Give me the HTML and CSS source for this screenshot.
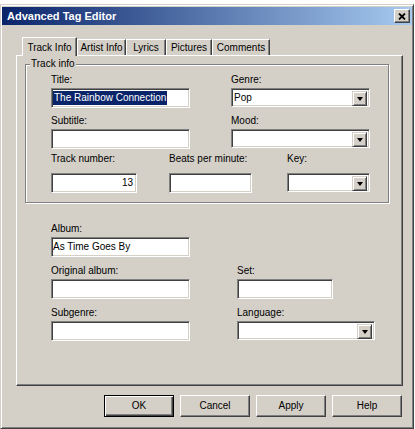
FILE: index.html
```html
<!DOCTYPE html>
<html>
<head>
<meta charset="utf-8">
<title>Advanced Tag Editor</title>
<link rel="stylesheet" href="styles.css">
</head>
<body>
<div class="window">
  <div class="titlebar">
    <span class="title">Advanced Tag Editor</span>
    <div class="close-btn"><svg width="8" height="7" viewBox="0 0 8 7"><path d="M1 0.5L7 6.5M7 0.5L1 6.5" stroke="#000" stroke-width="1.8" fill="none"/></svg></div>
  </div>
  <div class="tabs">
    <div class="tab tab-active w-track">Track Info</div>
    <div class="tab w-artist">Artist Info</div>
    <div class="tab w-lyrics">Lyrics</div>
    <div class="tab w-pictures">Pictures</div>
    <div class="tab w-comments">Comments</div>
  </div>
  <div class="panel">
    <div class="group">
      <span class="group-title">Track info</span>
      <div class="row">
        <div class="field w139"><span class="label">Title:</span><div class="edit"><span class="sel">The Rainbow Connection</span></div></div>
        <div class="field w139"><span class="label">Genre:</span><div class="combo"><span class="value">Pop</span><span class="drop"><span class="arrow"></span></span></div></div>
      </div>
      <div class="row row-2">
        <div class="field w139"><span class="label">Subtitle:</span><div class="edit"></div></div>
        <div class="field w139"><span class="label">Mood:</span><div class="combo"><span class="value"></span><span class="drop"><span class="arrow"></span></span></div></div>
      </div>
      <div class="row row-3">
        <div class="field w86"><span class="label label-tall">Track number:</span><div class="edit edit-right">13</div></div>
        <div class="field w83 gap-beats"><span class="label label-tall">Beats per minute:</span><div class="edit"></div></div>
        <div class="field w83 gap-key"><span class="label label-tall">Key:</span><div class="combo"><span class="value"></span><span class="drop"><span class="arrow"></span></span></div></div>
      </div>
    </div>
    <div class="lower">
      <div class="field"><span class="label">Album:</span><div class="edit">As Time Goes By</div></div>
      <div></div>
      <div class="field"><span class="label">Original album:</span><div class="edit"></div></div>
      <div class="field w96"><span class="label">Set:</span><div class="edit"></div></div>
      <div class="field"><span class="label">Subgenre:</span><div class="edit"></div></div>
      <div class="field"><span class="label">Language:</span><div class="combo"><span class="value"></span><span class="drop"><span class="arrow"></span></span></div></div>
    </div>
  </div>
  <div class="buttons">
    <div class="btn btn-default">OK</div>
    <div class="btn">Cancel</div>
    <div class="btn">Apply</div>
    <div class="btn">Help</div>
  </div>
</div>
</body>
</html>
```
FILE: styles.css
```css
* { box-sizing: border-box; }
html, body { margin: 0; padding: 0; }
body {
  background: #fff;
  width: 415px;
  height: 429px;
  overflow: hidden;
  font-family: "Liberation Sans", Arial, sans-serif;
  font-size: 10px;
  color: #000;
}
.window {
  margin-top: 4px;
  width: 414px;
  height: 425px;
  background: #d4d0c8;
  border: 1px solid;
  border-color: #d4d0c8 #404040 #404040 #d4d0c8;
  box-shadow: inset 1px 1px #fff, inset -1px -1px #808080;
  padding: 2px 1px 1px 1px;
  display: flex;
  flex-direction: column;
}
.titlebar {
  height: 18px;
  flex: none;
  display: flex;
  align-items: center;
  justify-content: space-between;
  padding-left: 5px;
  padding-right: 2px;
  background: linear-gradient(to right, #0a246a, #a6caf0);
  color: #fff;
  font-weight: bold;
  font-size: 11px;
}
.close-btn {
  width: 16px;
  height: 14px;
  background: #d4d0c8;
  border: 1px solid;
  border-color: #fff #404040 #404040 #fff;
  box-shadow: inset -1px -1px #808080;
  display: flex;
  align-items: center;
  justify-content: center;
}
.tabs {
  margin-top: 12px;
  margin-left: 20px;
  height: 19px;
  flex: none;
  display: flex;
  align-items: flex-end;
  position: relative;
  z-index: 1;
}
.tab {
  height: 16px;
  margin-bottom: 1px;
  padding-top: 1px;
  line-height: 13px;
  text-align: center;
  white-space: nowrap;
  border-top: 1px solid #fff;
  border-left: 1px solid #fff;
  border-right: 1px solid #404040;
  box-shadow: inset -1px 0 #808080;
  background: #d4d0c8;
}
.tab-active {
  height: 19px;
  margin-bottom: 0;
  padding-top: 3px;
}
.w-track { width: 55px; }
.w-artist { width: 49px; }
.w-lyrics { width: 40px; }
.w-pictures { width: 46px; }
.w-comments { width: 58px; }
.panel {
  margin-top: -1px;
  margin-left: 14px;
  width: 387px;
  height: 331px;
  flex: none;
  border: 1px solid;
  border-color: #fff #404040 #404040 #fff;
  box-shadow: inset -1px -1px #808080;
  padding: 8px 0 0 8px;
}
.group {
  position: relative;
  width: 364px;
  height: 139px;
  border: 1px solid #808080;
  box-shadow: inset 1px 1px #fff, 1px 1px #fff;
  padding: 8px 0 0 25px;
}
.group-title {
  position: absolute;
  top: -8px;
  left: 4px;
  padding: 0 1px;
  line-height: 13px;
  background: #d4d0c8;
}
.row { display: flex; }
.row-2 { margin-top: 6px; }
.row-3 { margin-top: 3px; }
.row .w139 + .w139 { margin-left: 41px; }
.gap-beats { margin-left: 32px; }
.gap-key { margin-left: 35px; }
.field { display: flex; flex-direction: column; }
.w139 { width: 139px; }
.w86 { width: 86px; }
.w83 { width: 83px; }
.w96 { width: 96px; }
.label {
  display: block;
  line-height: 13px;
  margin-bottom: 2px;
  white-space: nowrap;
}
.label-tall { margin-bottom: 8px; }
.edit {
  height: 20px;
  background: #fff;
  border: 1px solid;
  border-color: #808080 #fff #fff #808080;
  box-shadow: inset 1px 1px #404040, inset -1px -1px #d4d0c8;
  padding: 2px 2px 2px 1px;
  line-height: 14px;
  white-space: nowrap;
  overflow: hidden;
}
.edit-right { text-align: right; padding-right: 3px; }
.sel {
  display: inline-block;
  background: #0a246a;
  color: #fff;
  line-height: 14px;
  padding: 0 1px;
}
.combo {
  height: 19px;
  background: #fff;
  border: 1px solid;
  border-color: #808080 #fff #fff #808080;
  box-shadow: inset 1px 1px #404040, inset -1px -1px #d4d0c8;
  padding: 2px;
  display: flex;
}
.combo .value {
  flex: 1;
  line-height: 14px;
  padding-left: 0;
}
.drop {
  width: 15px;
  height: 15px;
  flex: none;
  background: #d4d0c8;
  border: 1px solid;
  border-color: #d4d0c8 #404040 #404040 #d4d0c8;
  box-shadow: inset 1px 1px #fff, inset -1px -1px #808080;
  display: flex;
  align-items: center;
  justify-content: center;
}
.arrow {
  width: 0;
  height: 0;
  border-left: 3.5px solid transparent;
  border-right: 3.5px solid transparent;
  border-top: 4px solid #000;
}
.lower {
  margin-top: 19px;
  margin-left: 26px;
  display: grid;
  grid-template-columns: 139px 138px;
  column-gap: 47px;
  row-gap: 7px;
  align-items: start;
}
.buttons {
  margin-top: 9px;
  padding-right: 10px;
  display: flex;
  justify-content: flex-end;
  gap: 6px;
}
.btn {
  width: 70px;
  height: 22px;
  background: #d4d0c8;
  border: 1px solid;
  border-color: #fff #404040 #404040 #fff;
  box-shadow: inset -1px -1px #808080;
  text-align: center;
  line-height: 19px;
}
.btn-default {
  border-color: #000;
  box-shadow: inset 1px 1px #fff, inset -1px -1px #404040, inset -2px -2px #808080;
}
```
